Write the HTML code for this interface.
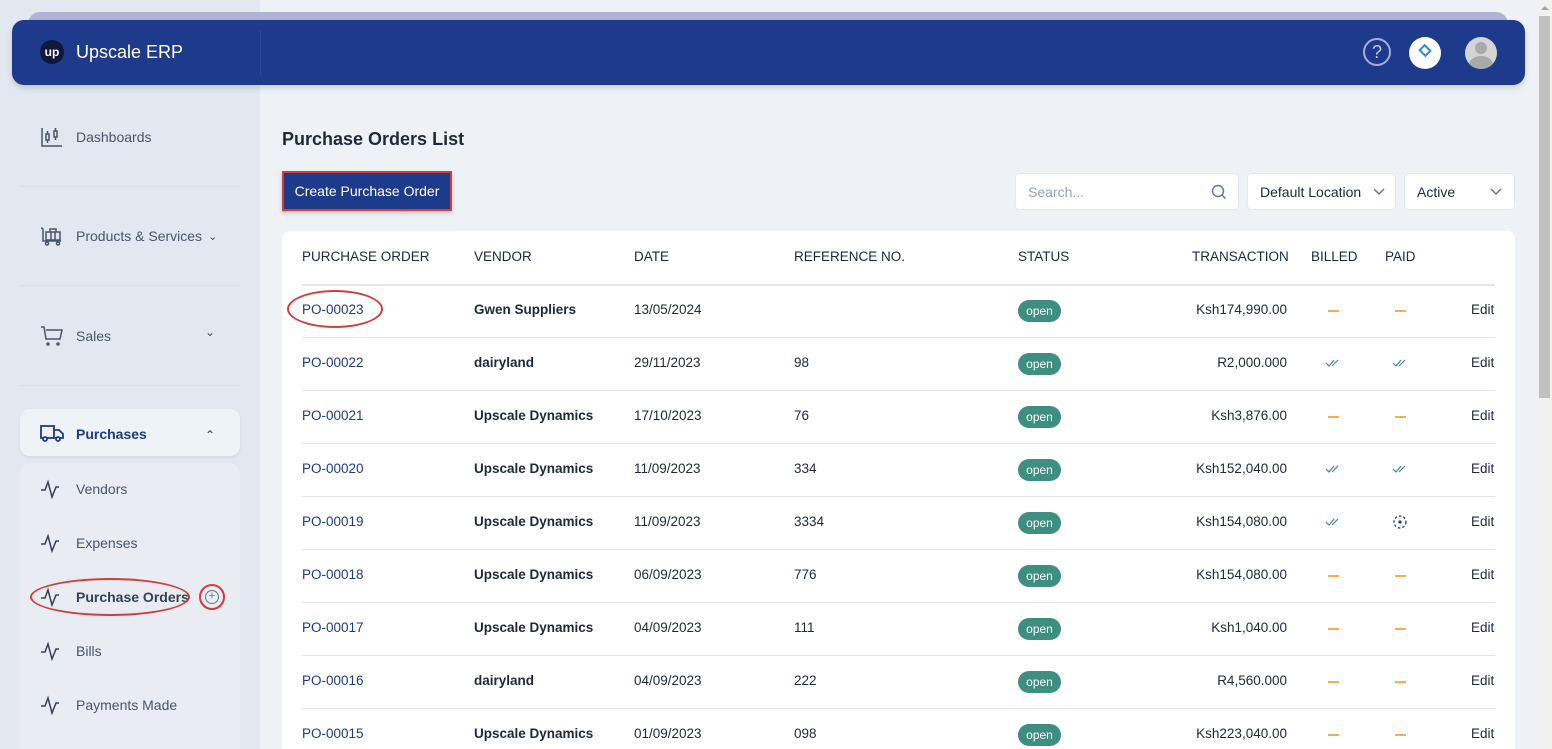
<!DOCTYPE html>
<html style="overflow:hidden;height:749px"><head><meta charset="utf-8"><style>
*{box-sizing:border-box;margin:0;padding:0}
body{width:1552px;height:749px;overflow:hidden;background:#eef2f7;font-family:"Liberation Sans",sans-serif;font-size:14px;color:#1e293b;position:relative}
.abs{position:absolute}
.side{left:0;top:0;width:260px;height:749px;background:#e2e8f0}
.hdrback{left:28px;top:12px;width:1480px;height:40px;background:#b0b3d8;border-radius:12px}
.hdr{left:12px;top:20px;width:1513px;height:65px;background:#1e3a8a;border-radius:12px;box-shadow:0 3px 6px rgba(0,0,0,.15)}
.nav{left:40px;font-size:14px;color:#475569;display:flex;align-items:center}
.nav svg{margin-right:12px}
.div{left:20px;width:220px;height:1px;background:#d8e0ea}
.sub{left:76px;font-size:14px;color:#475569}
.t{position:absolute;font-size:13.5px;color:#1e293b;white-space:nowrap}
.th{color:#1e293b;font-size:13.5px}
.po{color:#1e3a8a}
.vd{font-weight:bold}
.badge{position:absolute;left:1018px;width:43px;height:22px;border-radius:11px;background:#3f8f80;color:#fff;font-size:12px;text-align:center;line-height:22px}
.line{position:absolute;left:302px;width:1193px;height:1px;background:#e5e7eb}
.dash{position:absolute;width:11px;height:2px;background:#f6ad55}
.r{text-align:right}
</style></head><body>
<div class="abs side"></div>
<div class="abs" style="left:1537px;top:0;width:15px;height:749px;background:#f1f1f1"></div>
<div class="abs" style="left:1539px;top:16px;width:11px;height:382px;background:#c1c1c1"></div>
<div class="abs" style="left:1541px;top:6px;width:0;height:0;border-left:4px solid transparent;border-right:4px solid transparent;border-bottom:4px solid #a3a3a3"></div>
<div class="abs hdrback"></div>
<div class="abs hdr">
 <div class="abs" style="left:28px;top:20px;width:24px;height:24px;border-radius:50%;background:#0f1a3a;color:#fff;font-weight:bold;font-size:12px;text-align:center;line-height:24px">up</div>
 <div class="abs" style="left:64px;top:22px;color:#fff;font-size:18px">Upscale ERP</div>
 <div class="abs" style="left:248px;top:10px;width:1px;height:45px;background:#2c4797"></div>
 <div class="abs" style="left:1351px;top:18px;width:28px;height:28px;border-radius:50%;border:2px solid #a5aee0;color:#c5cbee;text-align:center;line-height:24px;font-size:18px">?</div>
 <div class="abs" style="left:1397px;top:17px;width:32px;height:32px;border-radius:50%;background:#fff"><div class="abs" style="left:11px;top:9px;width:10px;height:9px;border:2px solid #2d8ce0;transform:rotate(45deg)"></div></div>
 <div class="abs" style="left:1453px;top:17px;width:32px;height:32px;border-radius:50%;background:#d4d4d4;overflow:hidden"><div class="abs" style="left:10px;top:5px;width:12px;height:12px;border-radius:50%;background:#a9a9a9"></div><div class="abs" style="left:4px;top:19px;width:24px;height:18px;border-radius:50%;background:#a9a9a9"></div></div>
</div>

<div class="abs nav" style="top:127px"><svg width="24" height="20" viewBox="0 0 24 20" fill="none" stroke="#475569" stroke-width="1.5"><path d="M2 1v18h20"/><rect x="6" y="7" width="3" height="6"/><rect x="14" y="4" width="3" height="6"/><path d="M7.5 4v3M7.5 13v3M15.5 1v3M15.5 10v3"/></svg><span>Dashboards</span></div>
<div class="abs div" style="top:186px"></div>
<div class="abs nav" style="top:226px"><svg width="24" height="20" viewBox="0 0 24 20" fill="none" stroke="#475569" stroke-width="1.5"><path d="M1 2c2 0 2 1 2 3v10h18"/><rect x="6" y="6" width="14" height="8"/><path d="M10 6V3h6v3M11 6v8M15 6v8"/><circle cx="7" cy="17.5" r="1.5"/><circle cx="18" cy="17.5" r="1.5"/></svg>Products &amp; Services <span style="margin-left:6px;font-size:11px">&#8964;</span></div>
<div class="abs div" style="top:285px"></div>
<div class="abs nav" style="top:325px"><svg width="24" height="22" viewBox="0 0 24 22" fill="none" stroke="#475569" stroke-width="1.5"><path d="M1 2h3l2 12h14l2-9H6"/><circle cx="8" cy="19" r="1"/><circle cx="18" cy="19" r="1"/></svg>Sales</div>
<div class="abs" style="left:205px;top:325px;color:#475569;font-size:12px">&#8964;</div>
<div class="abs div" style="top:385px"></div>

<div class="abs" style="left:20px;top:409px;width:220px;height:47px;background:#eef3f8;border-radius:10px;box-shadow:0 2px 3px rgba(0,0,0,.06)"></div>
<div class="abs" style="left:40px;top:424px"><svg width="24" height="18" viewBox="0 0 24 18" fill="none" stroke="#1e3a8a" stroke-width="1.8"><path d="M1 2h13v12H1zM14 6h5l4 4v4h-9"/><circle cx="5" cy="15" r="2" fill="#eef3f8"/><circle cx="18" cy="15" r="2" fill="#eef3f8"/></svg></div>
<div class="abs" style="left:76px;top:426px;font-size:14px;font-weight:bold;color:#1e3a8a">Purchases</div>
<div class="abs" style="left:205px;top:428px;color:#1e3a8a;font-size:12px">&#8963;</div>
<div class="abs" style="left:20px;top:463px;width:220px;height:286px;background:#e9edf3;border-radius:12px 12px 0 0"></div>
<svg class="abs" style="left:40px;top:478px" width="24" height="250" viewBox="0 0 24 250" fill="none" stroke="#334155" stroke-width="1.5">
<path d="M1 12h4l3-8 4 15 4-10h3"/>
<path transform="translate(0,54)" d="M1 12h4l3-8 4 15 4-10h3"/>
<path transform="translate(0,108)" d="M1 12h4l3-8 4 15 4-10h3"/>
<path transform="translate(0,162)" d="M1 12h4l3-8 4 15 4-10h3"/>
<path transform="translate(0,216)" d="M1 12h4l3-8 4 15 4-10h3"/>
</svg>
<div class="abs sub" style="top:481px">Vendors</div>
<div class="abs sub" style="top:535px">Expenses</div>
<div class="abs sub" style="top:589px;font-weight:bold;color:#334155">Purchase Orders</div>
<div class="abs sub" style="top:643px">Bills</div>
<div class="abs sub" style="top:697px">Payments Made</div>
<div class="abs" style="left:30px;top:578px;width:160px;height:38px;border:2px solid #d43c3c;border-radius:50%"></div>
<div class="abs" style="left:199px;top:584px;width:26px;height:26px;border:2px solid #d43c3c;border-radius:50%"></div>
<div class="abs" style="left:205px;top:590px;width:14px;height:14px;border:1.2px solid #64748b;border-radius:50%;font-size:11px;line-height:11px;text-align:center;color:#64748b">+</div>

<div class="abs" style="left:282px;top:129px;font-size:18px;font-weight:bold;color:#1e293b">Purchase Orders List</div>
<div class="abs" style="left:282px;top:171px;width:170px;height:40px;border:2px solid #d43c3c;background:#1e3a8a;box-shadow:0 2px 4px rgba(0,0,0,.2)"><div style="color:#fff;font-size:14px;text-align:center;line-height:36px">Create Purchase Order</div></div>

<div class="abs" style="left:1015px;top:173px;width:224px;height:37px;background:#fff;border:1px solid #e2e8f0;border-radius:5px"><span class="abs" style="left:12px;top:10px;color:#94a3b8">Search...</span><svg class="abs" style="left:195px;top:10px" width="16" height="16" fill="none" stroke="#64748b" stroke-width="1.4"><circle cx="7" cy="7" r="5.5"/><path d="M11 11l3.5 3.5"/></svg></div>
<div class="abs" style="left:1247px;top:173px;width:149px;height:37px;background:#fff;border:1px solid #e2e8f0;border-radius:5px"><span class="abs" style="left:12px;top:10px;color:#1e293b">Default Location</span><svg class="abs" style="left:125px;top:14px" width="12" height="8" fill="none" stroke="#64748b" stroke-width="1.4"><path d="M1 1l5 5 5-5"/></svg></div>
<div class="abs" style="left:1404px;top:173px;width:111px;height:37px;background:#fff;border:1px solid #e2e8f0;border-radius:5px"><span class="abs" style="left:12px;top:10px;color:#1e293b">Active</span><svg class="abs" style="left:85px;top:14px" width="12" height="8" fill="none" stroke="#64748b" stroke-width="1.4"><path d="M1 1l5 5 5-5"/></svg></div>

<div class="abs" style="left:282px;top:231px;width:1233px;height:518px;background:#fff;border-radius:8px 8px 0 0"></div>
<div class="t th" style="left:302px;top:249px">PURCHASE ORDER</div>
<div class="t th" style="left:474px;top:249px">VENDOR</div>
<div class="t th" style="left:634px;top:249px">DATE</div>
<div class="t th" style="left:794px;top:249px">REFERENCE NO.</div>
<div class="t th" style="left:1018px;top:249px">STATUS</div>
<div class="t th" style="left:1192px;top:249px">TRANSACTION</div>
<div class="t th" style="left:1311px;top:249px">BILLED</div>
<div class="t th" style="left:1385px;top:249px">PAID</div>
<div class="line" style="top:284px;height:2px"></div>

<div id="rows"></div>
<div class="abs" style="left:287px;top:290px;width:96px;height:38px;border:2px solid #d43c3c;border-radius:50%"></div>

<script>
var d=[["PO-00023","Gwen Suppliers","13/05/2024","","Ksh174,990.00","-","-"],
["PO-00022","dairyland","29/11/2023","98","R2,000.000","c","c"],
["PO-00021","Upscale Dynamics","17/10/2023","76","Ksh3,876.00","-","-"],
["PO-00020","Upscale Dynamics","11/09/2023","334","Ksh152,040.00","c","c"],
["PO-00019","Upscale Dynamics","11/09/2023","3334","Ksh154,080.00","c","o"],
["PO-00018","Upscale Dynamics","06/09/2023","776","Ksh154,080.00","-","-"],
["PO-00017","Upscale Dynamics","04/09/2023","111","Ksh1,040.00","-","-"],
["PO-00016","dairyland","04/09/2023","222","R4,560.000","-","-"],
["PO-00015","Upscale Dynamics","01/09/2023","098","Ksh223,040.00","-","-"]];
function ic(t,x,y){if(t=="-")return '<div class="dash" style="left:'+(x-5)+'px;top:'+(y)+'px"></div>';
if(t=="c")return '<svg class="abs" style="left:'+(x-8)+'px;top:'+(y-5)+'px" width="16" height="10" fill="none" stroke="#3f8f80" stroke-width="1.2"><path d="M1 5l3 3 5-6M7 8l6-6"/></svg>';
return '<svg class="abs" style="left:'+(x-8)+'px;top:'+(y-8)+'px" width="16" height="16" fill="none" stroke="#1e3a8a" stroke-width="1.3"><circle cx="8" cy="8" r="6" stroke-dasharray="2.5 2"/><circle cx="8" cy="8" r="1" fill="#1e3a8a"/></svg>';}
var h="";d.forEach(function(r,i){var y=310+53*i,ty=y-8;
h+='<div class="t po" style="left:302px;top:'+ty+'px">'+r[0]+'</div>';
h+='<div class="t vd" style="left:474px;top:'+ty+'px">'+r[1]+'</div>';
h+='<div class="t" style="left:634px;top:'+ty+'px">'+r[2]+'</div>';
h+='<div class="t" style="left:794px;top:'+ty+'px">'+r[3]+'</div>';
h+='<div class="badge" style="top:'+(y-10)+'px">open</div>';
h+='<div class="t r" style="left:1087px;width:200px;top:'+ty+'px">'+r[4]+'</div>';
h+=ic(r[5],1333,y)+ic(r[6],1400,y);
h+='<div class="t" style="left:1471px;top:'+ty+'px">Edit</div>';
if(y+27<749)h+='<div class="line" style="top:'+(y+27)+'px"></div>';});
document.getElementById("rows").innerHTML=h;
</script>
</body></html>
